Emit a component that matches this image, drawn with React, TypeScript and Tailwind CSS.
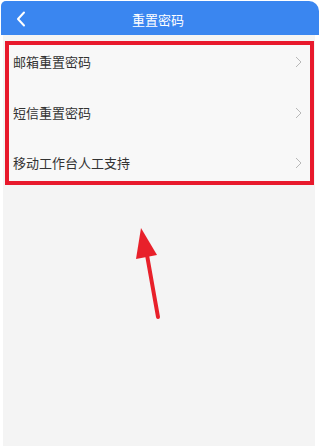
import React from 'react';

const items = ['邮箱重置密码', '短信重置密码', '移动工作台人工支持'];

function Chevron() {
  return (
    <svg viewBox="0 0 7 12" className="w-[7px] h-[12px]" fill="none" stroke="#b8b8b8" strokeWidth="1">
      <polyline points="1,1 6,6 1,11" />
    </svg>
  );
}

export default function App() {
  return (
    <div className="relative w-[322px] h-[446px] bg-white overflow-hidden" style={{ fontFamily: '"Noto Sans CJK SC", "Noto Sans", sans-serif' }}>
      {/* header */}
      <div className="relative ml-[1px] mt-[1px] w-[318px] h-[34px] bg-[#3a86f0] rounded-tl-[5px] rounded-tr-[10px] flex items-center justify-center">
        <svg viewBox="0 0 10 16" className="absolute left-[15px] top-[10px] w-[10px] h-[16px]" fill="none" stroke="white" strokeWidth="2" strokeLinecap="round" strokeLinejoin="round">
          <polyline points="8,1.5 2,8 8,14.5" />
        </svg>
        <span className="text-[13px] text-white mt-[4px] ml-[-4px]">重置密码</span>
      </div>

      {/* content */}
      <div className="ml-[3px] w-[312px] h-[411px] bg-[#f4f4f4] pt-[6px] pl-[2px]">
        <div className="w-[309px] h-[144px] border-[4px] border-[#e8192c] bg-[#f8f8f8] overflow-hidden">
          {items.map(t => (
            <div key={t} className="h-[50.5px] flex items-start justify-between pt-[8px] pl-[4px] pr-[8px]">
              <span className="text-[13px] leading-[18px] text-[#333]">{t}</span>
              <span className="mt-[3px]"><Chevron /></span>
            </div>
          ))}
        </div>
      </div>

      {/* annotation arrow */}
      <svg viewBox="0 0 322 446" className="absolute left-0 top-0 w-[322px] h-[446px] pointer-events-none">
        <polygon points="141,228 136,259 157,255" fill="#e8202a" />
        <line x1="147" y1="255" x2="158" y2="317" stroke="#e8202a" strokeWidth="4" strokeLinecap="round" />
      </svg>
    </div>
  );
}
